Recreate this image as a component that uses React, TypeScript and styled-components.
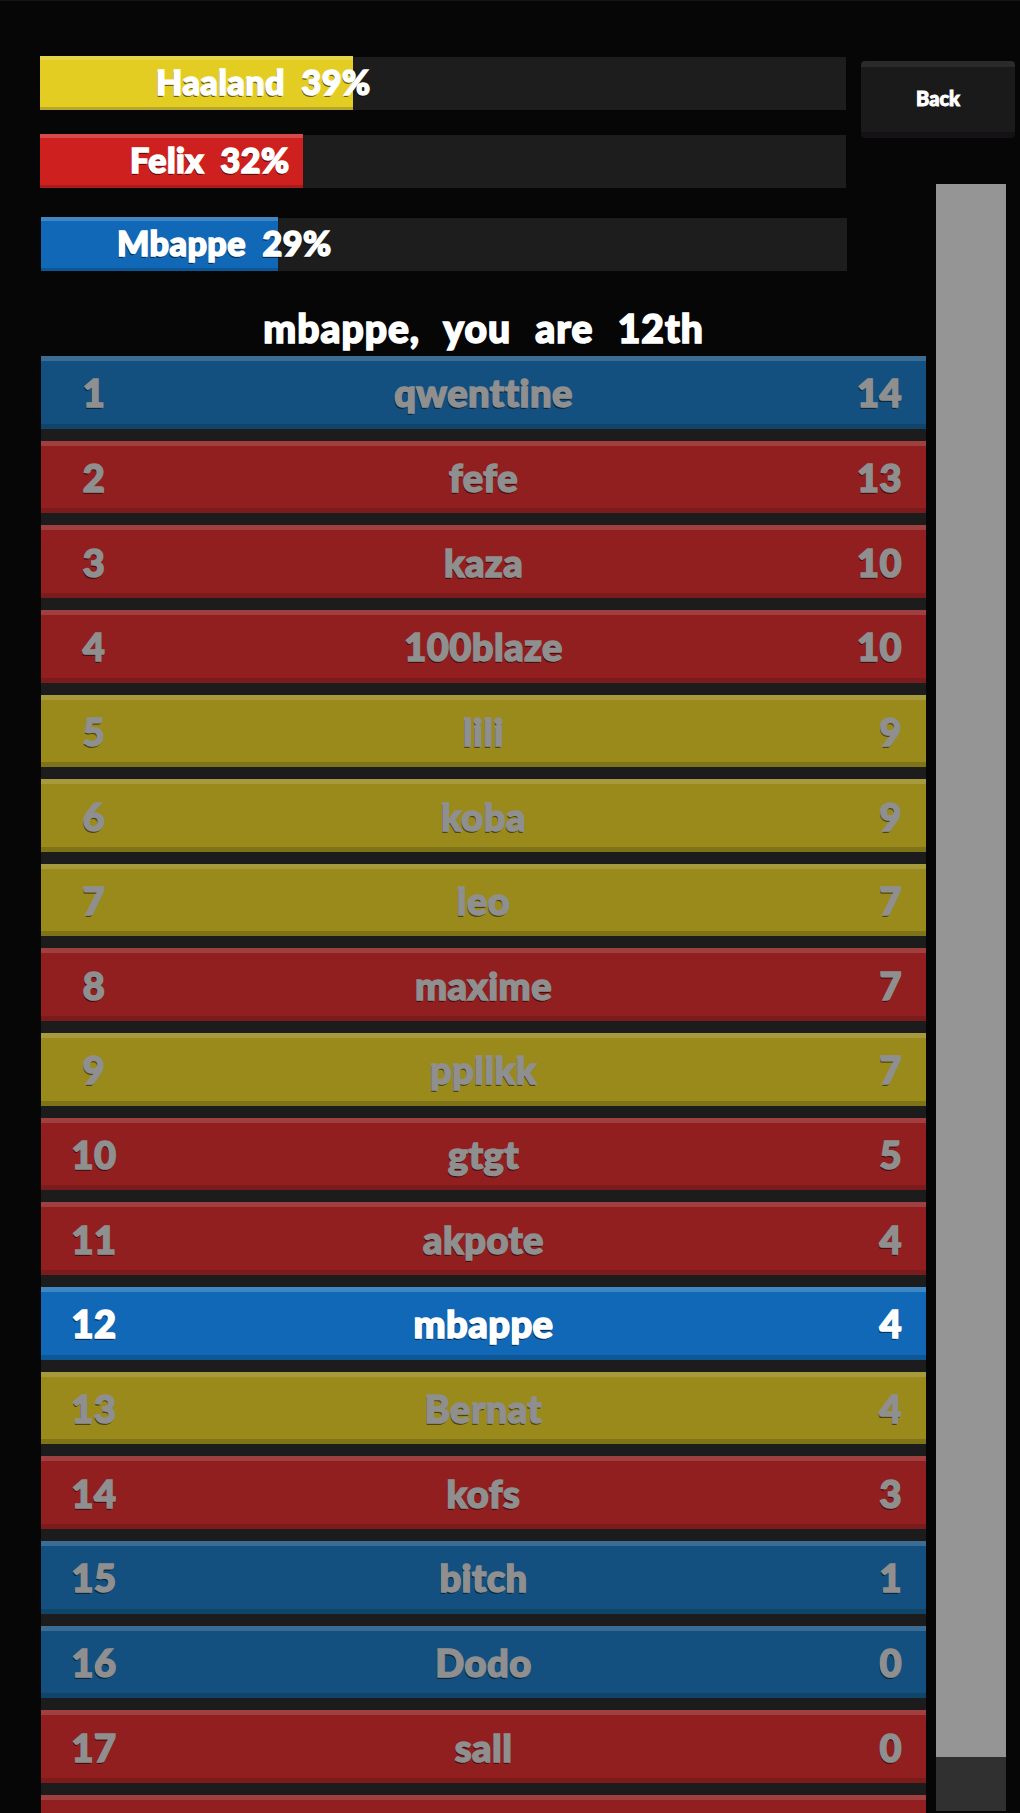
import * as React from 'react';
import styled, { createGlobalStyle } from 'styled-components';

type Team = 'blue' | 'red' | 'yellow';

const teamColors: Record<Team, { base: string; top: string; bottom: string }> = {
  blue: { base: '#1068b6', top: '#3f86c5', bottom: '#0d5797' },
  red: { base: '#cf2020', top: '#d64a4a', bottom: '#a81b1b' },
  yellow: { base: '#e3cd22', top: '#e6d54a', bottom: '#b8a62a' },
};

const dimColors: Record<Team, { base: string; top: string; bottom: string }> = {
  blue: { base: '#14507f', top: '#3a6c94', bottom: '#104469' },
  red: { base: '#911f1f', top: '#a03f3f', bottom: '#7b1b1b' },
  yellow: { base: '#9a8a1c', top: '#a69a3d', bottom: '#7f7318' },
};

const GlobalStyle = createGlobalStyle`
  html, body {
    margin: 0;
    padding: 0;
    background: #060606;
  }
  body {
    font-family: Lato, "Noto Sans", sans-serif;
  }
`;

const Page = styled.div`
  width: 1020px;
  height: 1813px;
  overflow: hidden;
  box-sizing: border-box;
  border-top: 1px solid #161616;
  background: #060606;
`;

const TopBlock = styled.div`
  display: flex;
  align-items: flex-start;
  height: 183px;
  box-sizing: border-box;
  padding: 56px 5px 0 40px;
`;

const TopBars = styled.div`
  width: 806px;
  display: flex;
  flex-direction: column;
  gap: 25px;
`;

const BackButton = styled.button`
  margin: 4px 0 0 15px;
  width: 154px;
  height: 77px;
  padding: 0 0 4px;
  border: 0;
  border-radius: 4px;
  background: #1a1a1a;
  border-top: 6px solid #2a2a2a;
  border-bottom: 6px solid #141214;
  color: #fff;
  font: 900 20px Lato, sans-serif;
  -webkit-text-stroke: 1px #fff;
  text-shadow: -1px 1px 0 rgba(0, 0, 0, 0.6);
`;

const BottomBlock = styled.div`
  display: flex;
  align-items: flex-start;
  padding-left: 41px;
`;

const MainColumn = styled.div`
  width: 885px;
  padding-top: 34px;
`;

const Track = styled.div`
  width: 806px;
  height: 53px;
  background: #1d1d1d;
  display: flex;
`;

const Fill = styled.div<{ $team: Team; $inset: number }>`
  height: 54px;
  margin-top: -1px;
  box-sizing: border-box;
  display: flex;
  align-items: center;
  padding: 0 0 4px ${(p) => p.$inset}px;
  background: ${(p) => teamColors[p.$team].base};
  border-top: 4px solid ${(p) => teamColors[p.$team].top};
  border-bottom: 3px solid ${(p) => teamColors[p.$team].bottom};
`;

const BarLabel = styled.span`
  color: #fff;
  white-space: nowrap;
  font-size: 34px;
  font-weight: 900;
  word-spacing: 8px;
  letter-spacing: 0.5px;
  -webkit-text-stroke: 1.6px #fff;
  text-shadow: -1px 2px 0 rgba(0, 0, 0, 0.55);
`;

const Heading = styled.h1`
  margin: 0;
  height: 85px;
  box-sizing: border-box;
  padding-top: 34px;
  text-align: center;
  color: #fff;
  font-size: 39px;
  line-height: 46px;
  font-weight: 900;
  word-spacing: 14px;
  letter-spacing: 1px;
  white-space: nowrap;
  -webkit-text-stroke: 1.6px #fff;
  text-shadow: -1px 2px 0 rgba(0, 0, 0, 0.5);
`;

const Board = styled.div`
  display: flex;
  flex-direction: column;
  gap: 12px;
  background: #1c1c1c;
`;

const Row = styled.div<{ $team: Team; $self: boolean }>`
  height: 72.65px;
  box-sizing: border-box;
  display: grid;
  grid-template-columns: 106px 1fr 106px;
  align-items: center;
  font-size: 38px;
  font-weight: 900;
  letter-spacing: 0.5px;
  color: ${(p) => (p.$self ? '#fff' : '#8f8f8f')};
  -webkit-text-stroke: 1.6px ${(p) => (p.$self ? '#fff' : '#8f8f8f')};
  text-shadow: -1px 2px 0 rgba(0, 0, 0, 0.5);
  background: ${(p) => (p.$self ? teamColors : dimColors)[p.$team].base};
  border-top: 5px solid ${(p) => (p.$self ? teamColors : dimColors)[p.$team].top};
  border-bottom: 5px solid ${(p) => (p.$self ? teamColors : dimColors)[p.$team].bottom};
`;

const Rank = styled.span`
  text-align: center;
`;

const PlayerName = styled.span`
  text-align: center;
`;

const Score = styled.span`
  text-align: right;
  padding-right: 24px;
`;

const Scrollbar = styled.div`
  width: 70px;
  height: 1627px;
  margin-left: 10px;
  display: flex;
  flex-direction: column;
  background: #303030;
`;

const ScrollThumb = styled.div`
  height: 1573px;
  background: #959595;
`;

const bars: { name: string; pct: string; team: Team; width: number; inset: number }[] = [
  { name: 'Haaland', pct: '39%', team: 'yellow', width: 313, inset: 116 },
  { name: 'Felix', pct: '32%', team: 'red', width: 263, inset: 90 },
  { name: 'Mbappe', pct: '29%', team: 'blue', width: 237, inset: 76 },
];

const players: [string, number, Team][] = [
  ['qwenttine', 14, 'blue'],
  ['fefe', 13, 'red'],
  ['kaza', 10, 'red'],
  ['100blaze', 10, 'red'],
  ['lili', 9, 'yellow'],
  ['koba', 9, 'yellow'],
  ['leo', 7, 'yellow'],
  ['maxime', 7, 'red'],
  ['ppllkk', 7, 'yellow'],
  ['gtgt', 5, 'red'],
  ['akpote', 4, 'red'],
  ['mbappe', 4, 'blue'],
  ['Bernat', 4, 'yellow'],
  ['kofs', 3, 'red'],
  ['bitch', 1, 'blue'],
  ['Dodo', 0, 'blue'],
  ['sall', 0, 'red'],
  ['', 0, 'red'],
];

const Bar = ({ bar }: { bar: (typeof bars)[number] }) => (
  <Track>
    <Fill $team={bar.team} $inset={bar.inset} style={{ width: bar.width }}>
      <BarLabel>
        {bar.name} {bar.pct}
      </BarLabel>
    </Fill>
  </Track>
);

export default function App() {
  return (
    <Page>
      <GlobalStyle />
      <TopBlock>
        <TopBars>
          <Bar bar={bars[0]} />
          <Bar bar={bars[1]} />
        </TopBars>
        <BackButton>Back</BackButton>
      </TopBlock>
      <BottomBlock>
        <MainColumn>
          <Bar bar={bars[2]} />
          <Heading>mbappe, you are 12th</Heading>
          <Board>
            {players.map(([name, score, team], i) => (
              <Row key={i} $team={team} $self={name === 'mbappe'}>
                <Rank>{name ? i + 1 : ''}</Rank>
                <PlayerName>{name}</PlayerName>
                <Score>{name ? score : ''}</Score>
              </Row>
            ))}
          </Board>
        </MainColumn>
        <Scrollbar>
          <ScrollThumb />
        </Scrollbar>
      </BottomBlock>
    </Page>
  );
}
